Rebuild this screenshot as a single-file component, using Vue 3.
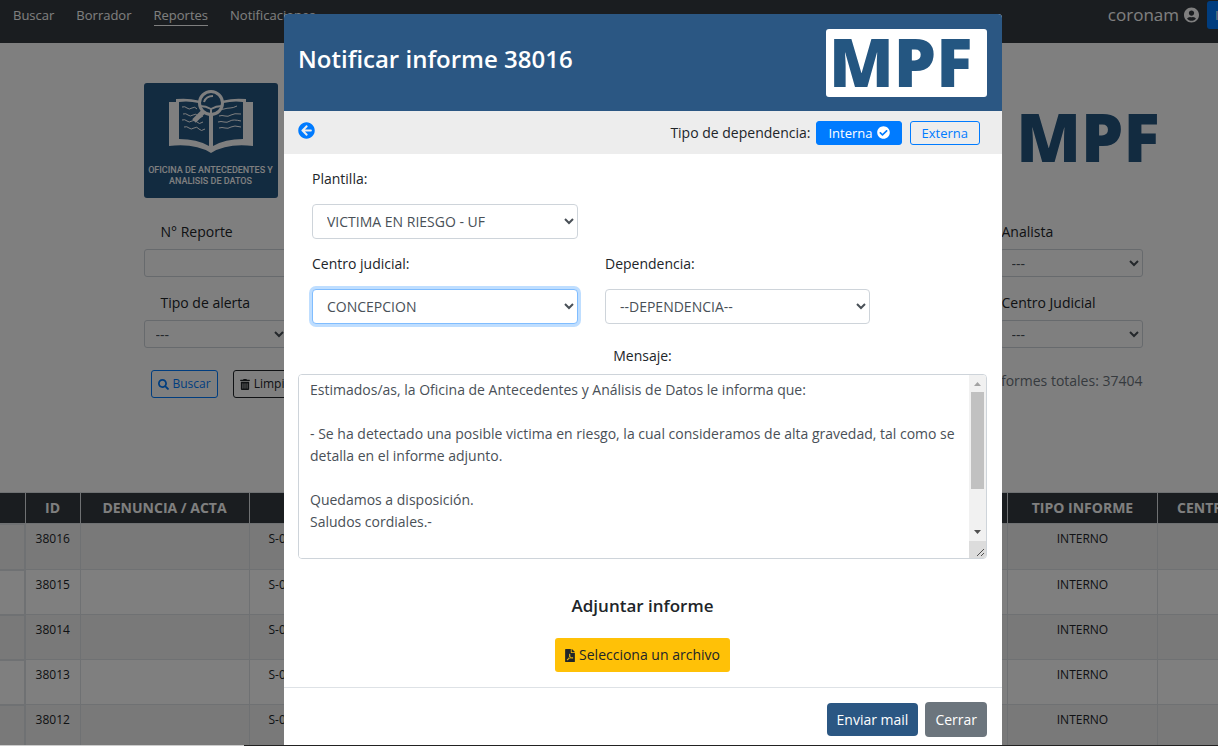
<script setup>
import { ref } from 'vue'

const icons = {
  back: { box: '0 0 512 512', d: 'M256 504C119 504 8 393 8 256S119 8 256 8s248 111 248 248-111 248-248 248zm28.9-143.6L209.4 288H392c13.3 0 24-10.7 24-24v-16c0-13.3-10.7-24-24-24H209.4l75.5-72.4c9.7-9.3 9.9-24.8.4-34.3l-11-10.9c-9.4-9.4-24.6-9.4-33.9 0L107.7 239c-9.4 9.4-9.4 24.6 0 33.9l132.7 132.7c9.4 9.4 24.6 9.4 33.9 0l11-10.9c9.5-9.5 9.3-25-.4-34.3z' },
  check: { box: '0 0 512 512', d: 'M504 256c0 136.967-111.033 248-248 248S8 392.967 8 256 119.033 8 256 8s248 111.033 248 248zM227.314 387.314l184-184c6.248-6.248 6.248-16.379 0-22.627l-22.627-22.627c-6.248-6.249-16.379-6.249-22.628 0L216 308.118l-70.059-70.059c-6.248-6.248-16.379-6.248-22.628 0l-22.627 22.627c-6.248 6.248-6.248 16.379 0 22.627l104 104c6.249 6.249 16.379 6.249 22.628.001z' },
  user: { box: '0 0 496 512', d: 'M248 8C111 8 0 119 0 256s111 248 248 248 248-111 248-248S385 8 248 8zm0 96c48.6 0 88 39.4 88 88s-39.4 88-88 88-88-39.4-88-88 39.4-88 88-88zm0 344c-58.7 0-111.3-26.6-146.5-68.2 18.8-35.4 55.6-59.8 98.5-59.8 2.4 0 4.8.4 7.1 1.1 13 4.2 26.6 6.9 40.9 6.9 14.3 0 28-2.7 40.9-6.9 2.3-.7 4.7-1.1 7.1-1.1 42.9 0 79.7 24.4 98.5 59.8C359.3 421.4 306.7 448 248 448z' },
  search: { box: '0 0 512 512', d: 'M505 442.7L405.3 343c-4.5-4.5-10.6-7-17-7H372c27.6-35.3 44-79.7 44-128C416 93.1 322.9 0 208 0S0 93.1 0 208s93.1 208 208 208c48.3 0 92.7-16.4 128-44v16.3c0 6.4 2.5 12.5 7 17l99.7 99.7c9.4 9.4 24.6 9.4 33.9 0l28.3-28.3c9.4-9.4 9.4-24.6.1-34zM208 336c-70.7 0-128-57.2-128-128 0-70.7 57.2-128 128-128 70.7 0 128 57.2 128 128 0 70.7-57.2 128-128 128z' },
  trash: { box: '0 0 448 512', d: 'M32 464a48 48 0 0 0 48 48h288a48 48 0 0 0 48-48V128H32zm272-256a16 16 0 0 1 32 0v224a16 16 0 0 1-32 0zm-96 0a16 16 0 0 1 32 0v224a16 16 0 0 1-32 0zm-96 0a16 16 0 0 1 32 0v224a16 16 0 0 1-32 0zM432 32H312l-9.4-18.7A24 24 0 0 0 281.1 0H166.8a23.7 23.7 0 0 0-21.4 13.3L136 32H16A16 16 0 0 0 0 48v32a16 16 0 0 0 16 16h416a16 16 0 0 0 16-16V48a16 16 0 0 0-16-16z' },
  pdf: { box: '0 0 384 512', d: 'M181.9 256.1c-5-16-4.9-46.9-2-46.9 8.4 0 7.6 36.9 2 46.9zm-1.7 47.2c-7.7 20.2-17.3 43.3-28.4 62.7 18.3-7 39-17.2 62.9-21.9-12.7-9.6-24.9-23.4-34.5-40.8zM86.1 428.1c0 .8 13.2-5.4 34.9-40.2-6.7 6.3-29.1 24.5-34.9 40.2zM248 160h136v328c0 13.3-10.7 24-24 24H24c-13.3 0-24-10.7-24-24V24C0 10.7 10.7 0 24 0h200v136c0 13.2 10.8 24 24 24zm-8 171.8c-20-12.2-33.3-29-42.7-53.8 4.5-18.5 11.6-46.6 6.2-64.2-4.7-29.4-42.4-26.5-47.8-6.8-5 18.3-.4 44.1 8.1 77-11.6 27.6-28.7 64.6-40.8 85.8-.1 0-.1.1-.2.1-27.1 13.9-73.6 44.5-54.5 68 5.6 6.9 16 10 21.5 10 17.9 0 35.7-18 61.1-61.8 25.8-8.5 54.1-19.1 79-23.2 21.7 11.8 47.1 19.5 64 19.5 29.2 0 31.2-32 19.7-43.4-13.9-13.6-54.3-9.7-73.6-7.2zM377 105L279 7c-4.5-4.5-10.6-7-17-7h-6v128h128v-6.1c0-6.3-2.5-12.4-7-16.9zm-74.1 255.3c4.1-2.7-2.5-11.9-42.8-9 37.1 15.8 42.8 9 42.8 9z' }
}

const links = ['Buscar', 'Borrador', 'Reportes', 'Notificaciones']
const rows = ['38016', '38015', '38014', '38013', '38012']
const message = ref(`Estimados/as, la Oficina de Antecedentes y Análisis de Datos le informa que:

- Se ha detectado una posible victima en riesgo, la cual consideramos de alta gravedad, tal como se detalla en el informe adjunto.

Quedamos a disposición.
Saludos cordiales.-`)
</script>

<template>
  <div class="viewport">
    <div class="page">
      <header class="navbar">
        <nav class="nav">
          <a v-for="l in links" :key="l" href="#" class="nav-link" :class="{ active: l === 'Reportes' }">{{ l }}</a>
        </nav>
        <div class="account">
          <span>coronam</span>
          <svg class="user-icon" :viewBox="icons.user.box"><path :d="icons.user.d" /></svg>
          <button type="button" class="nav-btn">Inicio</button>
        </div>
      </header>

      <main class="content">
        <div class="brands">
          <div class="office">
            <svg class="book" viewBox="0 0 84 64">
              <path fill="#fff" d="M0 12H7V9Q28 7 42 16Q56 7 77 9V12H84V56Q58 53 42 63Q26 53 0 56Z" />
              <path fill="#245681" d="M10 12Q28 10 40 18V56Q28 49 10 49ZM74 12Q56 10 44 18V56Q56 49 74 49Z" />
              <g fill="none" stroke="#fff" stroke-width="1">
                <path d="M13 17q3-1 5 1t5 0t5 1M14 24q3-1 5 1t5 0t5 1t5 0M13 30q3-1 5 1t5 0t5 1t6 0M15 37q3-1 5 1t5 0t5 1t6 0" />
                <path d="M49 19q3 1 6 0t6-1t7-2M50 26q3-1 6 0t6-1t10-1M49 32q3-1 6 0t6-1t11 0M50 38q3-1 6 0t6-1t10 0" />
              </g>
              <circle cx="42" cy="13" r="11.500" fill="#245681" stroke="#fff" stroke-width="3" />
              <path fill="none" stroke="#fff" stroke-width="2" d="M35 12Q37 6 44 6M31 16Q37 16 42 19Q47 16 53 16M42 18V25" />
              <path stroke="#fff" stroke-width="5" d="M34 22L25 31" />
            </svg>
            <span class="office-name">OFICINA DE ANTECEDENTES Y<br>ANALISIS DE DATOS</span>
          </div>
          <div class="mpf page-mpf">MPF</div>
        </div>

        <form class="filters" @submit.prevent>
          <div class="filter">
            <label for="f-num">N° Reporte</label>
            <input id="f-num" type="text">
          </div>
          <div class="filter end">
            <label for="f-an">Analista</label>
            <select id="f-an"><option>---</option></select>
          </div>
          <div class="filter">
            <label for="f-tipo">Tipo de alerta</label>
            <select id="f-tipo"><option>---</option></select>
          </div>
          <div class="filter end">
            <label for="f-cj">Centro Judicial</label>
            <select id="f-cj"><option>---</option></select>
          </div>
        </form>

        <div class="actions">
          <button type="button" class="btn-sm search">
            <svg class="ic" :viewBox="icons.search.box"><path :d="icons.search.d" /></svg>Buscar
          </button>
          <button type="button" class="btn-sm clear">
            <svg class="ic narrow" :viewBox="icons.trash.box"><path :d="icons.trash.d" /></svg>Limpiar
          </button>
          <span class="total">Informes totales: 37404</span>
        </div>
      </main>

      <table class="reports">
        <colgroup>
          <col class="c-tool"><col class="c-id"><col class="c-den"><col><col class="c-tipo"><col class="c-centro">
        </colgroup>
        <thead>
          <tr><th></th><th>ID</th><th>DENUNCIA / ACTA</th><th></th><th>TIPO INFORME</th><th class="left">CENTRO JUDICIAL</th></tr>
        </thead>
        <tbody>
          <tr v-for="r in rows" :key="r">
            <td class="tool"></td><td>{{ r }}</td><td></td><td class="left">S-0</td><td>INTERNO</td><td></td>
          </tr>
        </tbody>
      </table>
    </div>

    <div class="backdrop">
      <section class="modal" role="dialog" aria-labelledby="m-title">
        <header class="modal-head">
          <h1 id="m-title">Notificar informe 38016</h1>
          <div class="mpf modal-mpf">MPF</div>
        </header>

        <div class="subbar">
          <button type="button" class="back" aria-label="Volver">
            <svg :viewBox="icons.back.box"><path :d="icons.back.d" /></svg>
          </button>
          <span class="dep-label">Tipo de dependencia:</span>
          <button type="button" class="pill on">Interna
            <svg :viewBox="icons.check.box"><path :d="icons.check.d" /></svg>
          </button>
          <button type="button" class="pill">Externa</button>
        </div>

        <div class="modal-body">
          <div class="fields">
            <div class="field wide">
              <label for="m-pl">Plantilla:</label>
              <select id="m-pl"><option>VICTIMA EN RIESGO - UF</option></select>
            </div>
            <div class="field">
              <label for="m-cj">Centro judicial:</label>
              <select id="m-cj" class="focused"><option>CONCEPCION</option></select>
            </div>
            <div class="field">
              <label for="m-dep">Dependencia:</label>
              <select id="m-dep"><option>--DEPENDENCIA--</option></select>
            </div>
          </div>

          <label class="msg-label" for="m-msg">Mensaje:</label>
          <div class="msg">
            <textarea id="m-msg" v-model="message" spellcheck="false"></textarea>
            <div class="scroll" aria-hidden="true">
              <svg class="arrow up" viewBox="0 0 17 17"><path d="M5 11L8.500 7L12 11Z" /></svg>
              <div class="track"><div class="thumb"></div></div>
              <svg class="arrow" viewBox="0 0 17 17"><path d="M5 6L8.500 10L12 6Z" /></svg>
              <svg class="grip" viewBox="0 0 17 17"><path d="M8 15L15 8M12 15L15 12" /></svg>
            </div>
          </div>

          <h2>Adjuntar informe</h2>
          <button type="button" class="attach">
            <svg :viewBox="icons.pdf.box"><path :d="icons.pdf.d" /></svg>Selecciona un archivo
          </button>
        </div>

        <footer class="modal-foot">
          <button type="button" class="btn send">Enviar mail</button>
          <button type="button" class="btn close">Cerrar</button>
        </footer>
      </section>
    </div>
    <div class="edge"></div>
  </div>
</template>

<style>
body { margin: 0; }
</style>

<style scoped>
.viewport {
  position: relative;
  height: 100vh;
  overflow: hidden;
  background: #fff;
  color: #212529;
  font: 14px/22px "Open Sans", "Noto Sans", sans-serif;
}
.viewport *, .viewport *::before { box-sizing: border-box; }
button, input, select, textarea { font: inherit; margin: 0; }
svg { fill: currentColor; display: block; flex: none; }
.page, .backdrop { width: calc(100% + 68px); }

.navbar {
  display: flex;
  justify-content: space-between;
  align-items: flex-start;
  height: 43px;
  padding: 0 13px;
  background: #343a40;
  color: #fff;
}
.nav { display: flex; gap: 22px; padding-top: 5px; }
.nav-link { color: #fff; text-decoration: none; font-size: 13px; line-height: 20px; border-bottom: 1px solid transparent; }
.nav-link.active { border-color: #fff; }
.account { display: flex; align-items: center; font-size: 17px; padding-top: 1px; }
.user-icon { width: 15px; height: 16px; margin: 0 8px 0 5px; }
.nav-btn { width: 66px; height: 28px; padding: 0 8px; border: 0; border-radius: 3px; background: #007bff; color: #fff; font-size: 13px; text-align: left; }

.content { max-width: 999px; margin: 0 auto; }
.brands { display: flex; justify-content: space-between; align-items: flex-start; padding-top: 40px; }
.office {
  width: 134px;
  height: 115px;
  padding-top: 7px;
  border-radius: 3px;
  background: #245681;
  color: #fff;
  text-align: center;
}
.book { width: 84px; height: 64px; margin: 0 auto; }
.office-name { display: block; margin-top: 11px; font: 500 9px/11px Roboto, sans-serif; white-space: nowrap; }
.mpf { height: 68px; color: #245681; font-family: "Noto Sans", "Open Sans", sans-serif; font-weight: 900; font-size: 67px; line-height: 64px; }
.page-mpf { margin: 21px -17px 0 0; }

.filters {
  display: grid;
  grid-template-columns: 144px 143px;
  justify-content: space-between;
  row-gap: 15px;
  padding-top: 23px;
}
.filter { display: flex; flex-direction: column; gap: 6px; }
.filter label { padding-left: 17px; }
.filter.end label { padding-left: 2px; white-space: nowrap; }
.filter input, .filter select {
  width: 100%;
  height: 28px;
  padding: 0 0 0 7px;
  border: 1px solid #ced4da;
  border-radius: 3px;
  background: #fff;
  color: #495057;
}
.actions { display: flex; align-items: center; gap: 15px; padding: 22px 0 0 7px; }
.btn-sm {
  display: flex;
  align-items: center;
  gap: 4px;
  height: 28px;
  padding: 0 6px;
  border: 1px solid;
  border-radius: 3px;
  background: transparent;
  font-size: 12px;
}
.search { color: #007bff; }
.clear { color: #212529; }
.ic { width: 11px; height: 11px; }
.ic.narrow { width: 10px; }
.total { margin: 0 0 6px auto; color: #6c757d; }

.reports { width: calc(100% + 2px); margin: 94px 0 0 -2px; border-collapse: collapse; table-layout: fixed; }
.c-tool { width: 26px; }
.c-id { width: 55px; }
.c-den { width: 169px; }
.c-tipo { width: 150px; }
.c-centro { width: 128px; }
.reports th, .reports td { border: 1px solid #dee2e6; padding: 4px 0; text-align: center; vertical-align: top; white-space: nowrap; }
.reports th { height: 31px; background: #343a40; color: #fff; font-size: 14px; }
.reports td { height: 45px; font-size: 12px; }
.reports tbody tr:first-child td { height: 46px; }
.reports .left { text-align: left; padding-left: 19px; }
.reports tbody tr:nth-child(odd) { background: #f2f2f2; }
.reports .tool { border-width: 2px; }

.backdrop { position: absolute; top: 0; bottom: 0; left: 0; padding-top: 14px; background: rgba(0, 0, 0, .5); }
.modal {
  display: flex;
  flex-direction: column;
  max-width: 718px;
  min-height: 100%;
  margin: 0 auto;
  border-radius: 4px 4px 0 0;
  background: #fff;
  overflow: hidden;
}
.modal-head {
  display: flex;
  justify-content: space-between;
  align-items: flex-start;
  padding: 15px 15px 14px 14px;
  background: #2b5783;
}
h1 { margin: 14px 0 0; color: #fff; font-size: 24px; line-height: 32px; font-weight: 600; }
.modal-mpf { width: 161px; padding-left: 3px; border-radius: 3px; background: #fff; }
.subbar { display: flex; align-items: center; height: 43px; padding: 0 22px 0 14px; background: #ededed; }
.back { padding: 0; border: 0; background: none; color: #007bff; margin: 0 auto 4px 0; }
.back svg { width: 17px; height: 17px; }
.dep-label { margin-right: 6px; }
.pill {
  display: flex;
  align-items: center;
  gap: 4px;
  height: 24px;
  padding: 0 11px;
  border: 1px solid #007bff;
  border-radius: 3px;
  background: none;
  color: #007bff;
  font-size: 13px;
}
.pill.on { margin-right: 8px; background: #007bff; color: #fff; }
.pill svg { width: 13px; height: 13px; }

.modal-body { display: flex; flex-direction: column; padding: 14px 15px 15px 14px; }
.fields { display: grid; grid-template-columns: 266px 265px; gap: 14px 27px; padding: 0 14px; }
.wide { grid-column: 1 / -1; }
.field { display: flex; flex-direction: column; align-items: flex-start; gap: 14px; }
.field select {
  width: 100%;
  height: 35px;
  padding: 0 0 0 10px;
  border: 1px solid #ced4da;
  border-radius: 4px;
  background: #fff;
  color: #495057;
}
.wide select { width: 266px; }
.field .focused { border-color: #80bdff; box-shadow: 0 0 0 3px #bfdeff; }
.msg-label { align-self: center; margin: 21px 0 7px; }
.msg { display: flex; height: 185px; border: 1px solid #ced4da; border-radius: 4px; overflow: hidden; }
.msg textarea {
  flex: 1;
  min-width: 0;
  padding: 4px 11px;
  border: 0;
  outline: 0;
  resize: none;
  overflow: hidden;
  background: #fff;
  color: #495057;
}
.scroll { display: flex; flex-direction: column; width: 17px; background: #f1f1f1; color: #505050; }
.arrow, .grip { width: 17px; height: 17px; }
.up { color: #a3a3a3; }
.track { flex: 1; padding: 0 2px; }
.thumb { height: 97px; background: #c1c1c1; }
.grip { background: #dcdcdc; stroke: #505050; }
h2 { margin: 35px 0 20px; text-align: center; font-size: 17px; line-height: 24px; font-weight: 600; }
.attach {
  display: flex;
  align-items: center;
  align-self: center;
  gap: 4px;
  height: 34px;
  padding: 0 10px;
  border: 0;
  border-radius: 3px;
  background: #ffc107;
  color: #212529;
}
.attach svg { width: 10px; height: 13px; }
.modal-foot {
  display: flex;
  justify-content: flex-end;
  align-items: center;
  gap: 7px;
  padding: 14px 15px;
  border-top: 1px solid #dee2e6;
}
.btn { height: 35px; padding: 0 10px; border: 0; border-radius: 4px; color: #fff; }
.send { height: 33px; background: #2b5783; }
.close { background: #6c757d; }
.edge { position: absolute; left: 0; right: 0; bottom: 0; height: 1px; background: linear-gradient(90deg, #ccc 20%, #222 20%); }
</style>
